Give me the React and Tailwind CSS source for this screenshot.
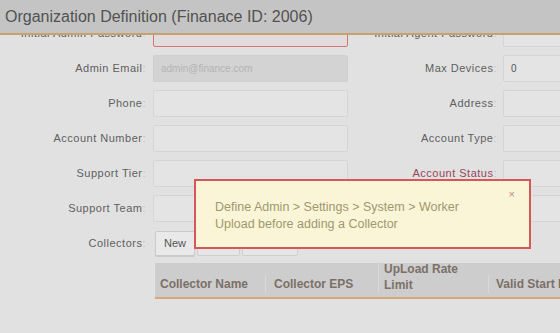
import React from "react";

const rows = [
  { left: "Initial Admin Password", right: "Initial Agent Password", error: true },
  { left: "Admin Email", right: "Max Devices", leftValue: "admin@finance.com", disabled: true, rightValue: "0" },
  { left: "Phone", right: "Address" },
  { left: "Account Number", right: "Account Type" },
  { left: "Support Tier", right: "Account Status", rightRed: true },
  { left: "Support Team", right: "" },
];

const Label = ({ text, red, className }) => (
  <div className={`text-right text-[11px] tracking-[0.5px] whitespace-nowrap ${red ? "text-[#94485a]" : "text-[#5f5f5f]"} ${className}`}>
    {text}
    {text && <span className="text-[#bdbdbd]">:</span>}
  </div>
);

const Input = ({ value, disabled, error, className }) => (
  <div
    className={`h-[27px] shrink-0 rounded-[2px] border flex items-center px-[7px] text-[10px] ${className} ${
      error
        ? "border-[#d27676] bg-[#e3dcdc]"
        : disabled
        ? "border-[#d0d0d0] bg-[#d3d3d3] text-[#b3b3b3]"
        : "border-[#d5d5d5] bg-[#e4e4e4] text-[#555]"
    }`}
  >
    {value}
  </div>
);

export default function App() {
  return (
    <div className="w-[560px] h-[333px] bg-[#e1e1e1] flex flex-col overflow-hidden relative font-['Liberation_Sans',Arial,sans-serif]">
      <div className="h-[35px] shrink-0 bg-[#c4c4c4] border-b-2 border-[#c8a26c] flex items-center px-[5px] text-[16px] text-[#525252] relative z-10">
        Organization Definition (Finanace ID: 2006)
      </div>

      <div className="flex-1 overflow-hidden">
        <div className="-mt-[19px]">
          {rows.map((r, i) => (
            <div key={i} className="h-[35px] flex items-center">
              <Label text={r.left} className="w-[146px] shrink-0" />
              <Input value={r.leftValue} disabled={r.disabled} error={r.error} className="ml-[7px] w-[195px]" />
              <Label text={r.right} red={r.rightRed} className="w-[149px] shrink-0" />
              <Input value={r.rightValue} className="ml-[6px] w-[195px]" />
            </div>
          ))}

          <div className="h-[35px] flex items-center">
            <Label text="Collectors" className="w-[146px] shrink-0" />
            <div className="ml-[9px] flex gap-[2px]">
              <button className="h-[25px] w-[40px] border border-[#cacaca] bg-[#e9e9e9] rounded-[2px] text-[11px] text-[#555] shadow-[0_1px_1px_rgba(0,0,0,0.1)]">
                New
              </button>
              <button className="h-[25px] w-[43px] border border-[#cfcfcf] bg-[#e6e6e6] rounded-[2px] text-[11px] text-[#555]">
                Edit
              </button>
              <button className="h-[25px] w-[56px] border border-[#cfcfcf] bg-[#e6e6e6] rounded-[2px] text-[11px] text-[#555]">
                Delete
              </button>
            </div>
          </div>

          <div className="ml-[155px] mt-[2px] h-[36px] bg-[#cdcdcd] border-b-2 border-[#d6a877] flex items-end pb-[4px] text-[12px] font-bold text-[#7b7068] whitespace-nowrap">
            <div className="w-[110px] shrink-0 pl-[5px]">Collector Name</div>
            <div className="w-[113px] shrink-0 pl-[8px] border-l border-[#d9d9d9]">Collector EPS</div>
            <div className="w-[110px] shrink-0 pl-[5px] border-l border-[#d9d9d9] leading-[16px]">
              UpLoad Rate
              <br />
              Limit
            </div>
            <div className="shrink-0 pl-[7px] border-l border-[#d9d9d9]">Valid Start Date</div>
          </div>
        </div>
      </div>

      <div className="absolute left-[194px] top-[179px] w-[337px] h-[70px] bg-[#fbf5d7] border-2 border-[#d6575a] pl-[19px] pt-[18px] text-[12.5px] leading-[17px] text-[#9e9870] z-20">
        <span className="absolute right-[14px] top-[5px] text-[11px] text-[#bb8c8c]">×</span>
        Define Admin &gt; Settings &gt; System &gt; Worker
        <br />
        Upload before adding a Collector
      </div>
    </div>
  );
}
